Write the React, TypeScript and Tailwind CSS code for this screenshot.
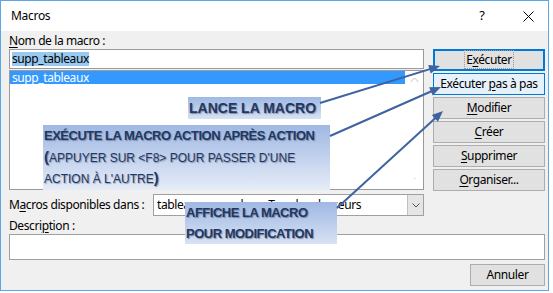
import React from "react";

const UI = { fontFamily: '"Noto Sans", "Liberation Sans", sans-serif' };
const LBL = { fontFamily: '"Liberation Sans", Arial, sans-serif' };

function U({ children }: { children: React.ReactNode }) {
  return <span className="underline underline-offset-[2px] decoration-[1px]">{children}</span>;
}

function Btn({ children, variant }: { children: React.ReactNode; variant?: "default" | "hover" }) {
  const base = "h-[22px] w-full flex items-center justify-center text-[12px] tracking-[-0.4px] text-black whitespace-nowrap";
  if (variant === "default")
    return <div className={`${base} bg-[#e1e1e1] border-2 border-[#0078d7]`}><span>{children}</span></div>;
  if (variant === "hover")
    return <div className={`${base} bg-[#e5f1fb] border border-[#0078d7]`}><span>{children}</span></div>;
  return <div className={`${base} bg-[#e1e1e1] border border-[#adadad]`}><span>{children}</span></div>;
}

function arrowHead(x1: number, y1: number, x2: number, y2: number, len = 11, half = 4.5) {
  const dx = x2 - x1;
  const dy = y2 - y1;
  const d = Math.hypot(dx, dy);
  const ux = dx / d;
  const uy = dy / d;
  const bx = x2 - ux * len;
  const by = y2 - uy * len;
  const px = -uy;
  const py = ux;
  return `${x2},${y2} ${bx + px * half},${by + py * half} ${bx - px * half},${by - py * half}`;
}

function Arrows() {
  const arrows: [number, number, number, number][] = [
    [320, 103, 440, 66],
    [330, 136, 441, 87],
    [337, 208, 443, 111],
  ];
  return (
    <svg className="absolute left-0 top-0 pointer-events-none" width={553} height={293}>
      {arrows.map(([x1, y1, x2, y2], i) => {
        const d = Math.hypot(x2 - x1, y2 - y1);
        const ex = x2 - ((x2 - x1) / d) * 8;
        const ey = y2 - ((y2 - y1) / d) * 8;
        return (
          <g key={i}>
            <line x1={x1} y1={y1} x2={ex} y2={ey} stroke="#3d63a0" strokeWidth={2} />
            <polygon points={arrowHead(x1, y1, x2, y2)} fill="#3d63a0" />
          </g>
        );
      })}
    </svg>
  );
}

export default function App() {
  return (
    <div className="w-[553px] h-[293px] bg-white relative overflow-hidden" style={UI}>
      <div className="w-[549px] h-[291px] border border-[#5aa6e6] flex flex-col">
        {/* Title bar */}
        <div className="h-[30px] bg-white flex items-center pl-[10px] pr-[14px] shrink-0">
          <span className="text-[12px] tracking-[-0.3px] text-black">Macros</span>
          <span className="ml-auto w-[20px] text-center text-[13px] text-black">?</span>
          <svg className="ml-[31px]" width="11" height="11" viewBox="0 0 11 11">
            <path d="M0.5 0.5 L10.5 10.5 M10.5 0.5 L0.5 10.5" stroke="#000" strokeWidth="1" />
          </svg>
        </div>

        {/* Content */}
        <div className="flex-1 bg-[#f0f0f0] pl-[8px] pr-[3px] pt-[2px] flex flex-col text-[12px] tracking-[-0.4px]">
          <div className="flex gap-[9px]">
            {/* Left column */}
            <div className="w-[415px] flex flex-col">
              <div className="h-[16px] leading-[16px] text-black whitespace-nowrap">
                <U>N</U>om de la macro :
              </div>
              <div className="h-[20px] bg-white border border-[#9a9a9a] pl-[2px] flex items-center">
                <span className="bg-[#99c9ef] leading-[14px] text-black">supp_tableaux</span>
              </div>
              <div className="mt-[1px] h-[120px] bg-white border border-[#9a9a9a] flex">
                <div className="flex-1">
                  <div className="h-[13px] bg-[#3399ff] text-white leading-[13px] pl-[2px]">
                    supp_tableaux
                  </div>
                </div>
                <div className="w-[18px] flex flex-col items-center justify-between py-[6px]">
                  <svg width="9" height="6" viewBox="0 0 9 6">
                    <path d="M0.5 5 L4.5 1 L8.5 5" stroke="#c0c0c0" strokeWidth="1" fill="none" />
                  </svg>
                  <svg width="9" height="6" viewBox="0 0 9 6">
                    <path d="M3.5 1 L4.5 2 L5.5 1" stroke="#d8d8d8" strokeWidth="1" fill="none" />
                  </svg>
                </div>
              </div>
              <div className="mt-[4px] h-[22px] flex items-center">
                <div className="w-[144px] text-black whitespace-nowrap">
                  M<U>a</U>cros disponibles dans :
                </div>
                <div className="flex-1 h-full bg-white border border-[#a0a0a0] flex">
                  <div className="flex-1 pl-[3px] leading-[20px] text-black overflow-hidden whitespace-nowrap">
                    tableaux supp.xlsm - Tous les classeurs
                  </div>
                  <div className="w-[16px] bg-[#e5e5e5] border-l border-[#c0c0c0] flex items-center justify-center">
                    <svg width="8" height="5" viewBox="0 0 8 5">
                      <path d="M0.5 0.5 L4 4 L7.5 0.5" stroke="#505050" strokeWidth="1" fill="none" />
                    </svg>
                  </div>
                </div>
              </div>
            </div>

            {/* Right column */}
            <div className="w-[112px] mt-[16px] flex flex-col gap-[2px]">
              <Btn variant="default">
                <span className="border border-dotted border-[#9a9a9a] px-[1px] leading-[14px]">
                  E<U>x</U>écuter
                </span>
              </Btn>
              <Btn variant="hover">
                Exécuter <U>p</U>as à pas
              </Btn>
              <Btn>
                <U>M</U>odifier
              </Btn>
              <Btn>
                <U>C</U>réer
              </Btn>
              <Btn>
                <U>S</U>upprimer
              </Btn>
              <Btn>
                <U>O</U>rganiser...
              </Btn>
            </div>
          </div>

          <div className="mt-[2px] h-[16px] leading-[16px] text-black whitespace-nowrap">
            Descri<U>p</U>tion :
          </div>
          <div className="h-[26px] bg-white border border-[#a0a0a0]" />
          <div className="mt-[4px] flex justify-end">
            <div className="w-[75px] h-[22px] bg-[#e1e1e1] border border-[#adadad] flex items-center justify-center text-black">
              Annuler
            </div>
          </div>
        </div>
      </div>

      {/* Annotation labels */}
      <div
        className="absolute left-[188px] top-[97px] w-[133px] h-[22px] bg-linear-to-b from-[#9fb8e3] to-[#d8e2f3] pl-[1px] flex items-center text-[14px] font-bold text-[#1f3866] [text-shadow:1px_1px_1px_rgba(70,80,100,0.55)] whitespace-nowrap"
        style={LBL}
      >
        LANCE LA MACRO
      </div>
      <div
        className="absolute left-[43px] top-[125px] w-[287px] h-[65px] bg-linear-to-b from-[#9fb8e3] to-[#e6ecf7] pl-[1px] flex flex-col text-[#1f3866] [text-shadow:1px_1px_1px_rgba(70,80,100,0.5)] whitespace-nowrap"
        style={LBL}
      >
        <div className="h-[21px] leading-[21px] text-[13px] font-bold tracking-[-0.5px]">
          EXÉCUTE LA MACRO ACTION APRÈS ACTION
        </div>
        <div className="h-[22px] leading-[22px] text-[12px]">
          <span className="font-bold text-[15px]">(</span>APPUYER SUR &lt;F8&gt; POUR PASSER D'UNE
        </div>
        <div className="h-[22px] leading-[20px] text-[12px]">
          ACTION À L'AUTRE<span className="font-bold text-[15px]">)</span>
        </div>
      </div>
      <div
        className="absolute left-[185px] top-[202px] w-[152px] h-[42px] bg-linear-to-b from-[#9fb8e3] to-[#d8e2f3] pl-[1px] flex flex-col text-[13px] font-bold text-[#1f3866] tracking-[-0.5px] [text-shadow:1px_1px_1px_rgba(70,80,100,0.55)] whitespace-nowrap"
        style={LBL}
      >
        <div className="h-[21px] leading-[22px]">AFFICHE LA MACRO</div>
        <div className="h-[21px] leading-[22px]">POUR MODIFICATION</div>
      </div>

      <Arrows />
    </div>
  );
}
